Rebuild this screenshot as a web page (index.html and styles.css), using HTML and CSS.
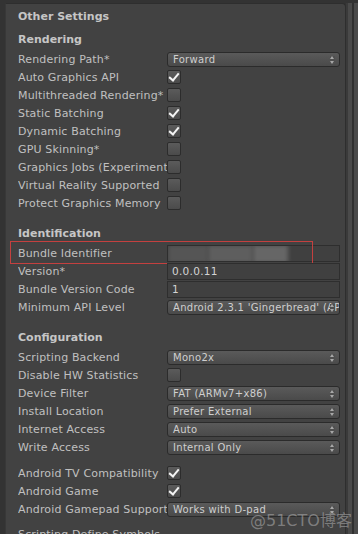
FILE: index.html
```html
<!DOCTYPE html>
<html lang="en">
<head>
    <meta charset="UTF-8">
    <title>Other Settings</title>
    <link rel="stylesheet" href="styles.css">
</head>
<body>
    <div class="window">
        <div class="panel">
            <div class="title">Other Settings</div>

            <div class="heading first">Rendering</div>
            <div class="row"><span class="label">Rendering Path*</span><div class="popup">Forward<span class="arrows"></span></div></div>
            <div class="row"><span class="label">Auto Graphics API</span><span class="check on"></span></div>
            <div class="row"><span class="label">Multithreaded Rendering*</span><span class="check"></span></div>
            <div class="row"><span class="label">Static Batching</span><span class="check on"></span></div>
            <div class="row"><span class="label">Dynamic Batching</span><span class="check on"></span></div>
            <div class="row"><span class="label">GPU Skinning*</span><span class="check"></span></div>
            <div class="row"><span class="label">Graphics Jobs (Experimental)</span><span class="check"></span></div>
            <div class="row"><span class="label">Virtual Reality Supported</span><span class="check"></span></div>
            <div class="row"><span class="label">Protect Graphics Memory</span><span class="check"></span></div>

            <div class="heading">Identification</div>
            <div class="row highlight">
                <span class="label">Bundle Identifier</span>
                <div class="field hidden-value">
                    <span class="smudge s1"></span>
                    <span class="smudge s2"></span>
                    <span class="smudge s3"></span>
                </div>
                <div class="redbox"></div>
            </div>
            <div class="row"><span class="label">Version*</span><div class="field">0.0.0.11</div></div>
            <div class="row"><span class="label">Bundle Version Code</span><div class="field">1</div></div>
            <div class="row"><span class="label">Minimum API Level</span><div class="popup">Android 2.3.1 'Gingerbread' (API level 9)<span class="arrows"></span></div></div>

            <div class="heading">Configuration</div>
            <div class="row"><span class="label">Scripting Backend</span><div class="popup">Mono2x<span class="arrows"></span></div></div>
            <div class="row"><span class="label">Disable HW Statistics</span><span class="check"></span></div>
            <div class="row"><span class="label">Device Filter</span><div class="popup">FAT (ARMv7+x86)<span class="arrows"></span></div></div>
            <div class="row"><span class="label">Install Location</span><div class="popup">Prefer External<span class="arrows"></span></div></div>
            <div class="row"><span class="label">Internet Access</span><div class="popup">Auto<span class="arrows"></span></div></div>
            <div class="row"><span class="label">Write Access</span><div class="popup">Internal Only<span class="arrows"></span></div></div>

            <div class="group">
                <div class="row"><span class="label">Android TV Compatibility</span><span class="check on"></span></div>
                <div class="row"><span class="label">Android Game</span><span class="check on"></span></div>
                <div class="row"><span class="label">Android Gamepad Support Level</span><div class="popup">Works with D-pad<span class="arrows"></span></div></div>
            </div>

            <div class="row define"><span class="label wide">Scripting Define Symbols</span></div>
        </div>
        <div class="scrollbar"></div>
        <div class="watermark">@51CTO博客</div>
    </div>
</body>
</html>
```

FILE: styles.css
```css
body {
    margin: 0;
    background-color: #fff;
    font-family: 'DejaVu Sans', sans-serif;
    font-size: 11px;
    color: #c0c0c0;
}
.window {
    position: relative;
    height: 534px;
    overflow: hidden;
    display: flex;
    background-color: #333;
}
.panel {
    flex: 1;
    margin: 3px 0 0 5px;
    padding: 3px 5px 0 12px;
    background-color: #424242;
    border-top: 1px solid #2e2e2e;
    border-right: 1px solid #2e2e2e;
    border-left: 1px solid #383838;
    border-top-right-radius: 4px;
}
.title, .heading {
    font-weight: bold;
    height: 20px;
    line-height: 20px;
    color: #c6c6c6;
}
.heading.first {
    margin-top: 3px;
}
.heading {
    margin-top: 12px;
}
.row {
    position: relative;
    display: grid;
    grid-template-columns: 149px 1fr;
    align-items: center;
    height: 18px;
}
.label {
    white-space: nowrap;
    overflow: hidden;
    letter-spacing: 0.15px;
}
.label.wide {
    overflow: visible;
}
.check {
    width: 12px;
    height: 12px;
    border: 1px solid #2c2c2c;
    border-radius: 2px;
    background: linear-gradient(#5b5b5b, #4b4b4b);
    position: relative;
}
.check.on::after {
    content: '';
    position: absolute;
    left: 3px;
    top: 0px;
    width: 4px;
    height: 8px;
    border-right: 2px solid #f4f4f4;
    border-bottom: 2px solid #f4f4f4;
    transform: rotate(40deg);
}
.popup {
    position: relative;
    height: 13px;
    line-height: 13px;
    padding: 0 16px 0 5px;
    font-size: 10px;
    letter-spacing: 0.3px;
    color: #cfcfcf;
    border: 1px solid #2b2b2b;
    border-radius: 3px;
    background: linear-gradient(#5a5a5a, #4a4a4a);
    white-space: nowrap;
    overflow: hidden;
}
.arrows {
    position: absolute;
    right: 4px;
    top: 3px;
    width: 5px;
    height: 8px;
    background-color: #4f4f4f;
}
.arrows::before, .arrows::after {
    content: '';
    position: absolute;
    left: 0;
    border-left: 2.5px solid transparent;
    border-right: 2.5px solid transparent;
}
.arrows::before {
    top: 0;
    border-bottom: 3px solid #a8a8a8;
}
.arrows::after {
    bottom: 0;
    border-top: 3px solid #a8a8a8;
}
.field {
    position: relative;
    height: 15px;
    line-height: 15px;
    padding: 0 4px;
    font-size: 10.5px;
    letter-spacing: 0.3px;
    color: #d4d4d4;
    border: 1px solid #2e2e2e;
    background-color: #404040;
}
.hidden-value {
    overflow: hidden;
}
.smudge {
    position: absolute;
    top: -1px;
    height: 18px;
    filter: blur(2px);
}
.s1 { left: 0; width: 40px; background-color: #555; }
.s2 { left: 40px; width: 45px; background-color: #5e5e5e; }
.s3 { left: 85px; width: 35px; background-color: #666; }
.redbox {
    position: absolute;
    left: -8px;
    top: -3px;
    width: 301px;
    height: 21px;
    border: 1px solid #c4403f;
    pointer-events: none;
}
.group {
    margin-top: 8px;
}
.define {
    margin-top: 7px;
}
.scrollbar {
    width: 12px;
    margin-top: 3px;
    background: linear-gradient(90deg, #3a3a3a 0, #3a3a3a 2px, #4a4a4a 2px, #4a4a4a 6px, #303030 6px, #303030 8px, #4a4a4a 8px);
}
.watermark {
    position: absolute;
    left: 250px;
    top: 507px;
    font-family: 'DejaVu Sans', 'Noto Sans CJK SC', sans-serif;
    font-size: 16px;
    color: rgba(200, 200, 200, 0.45);
}
```
